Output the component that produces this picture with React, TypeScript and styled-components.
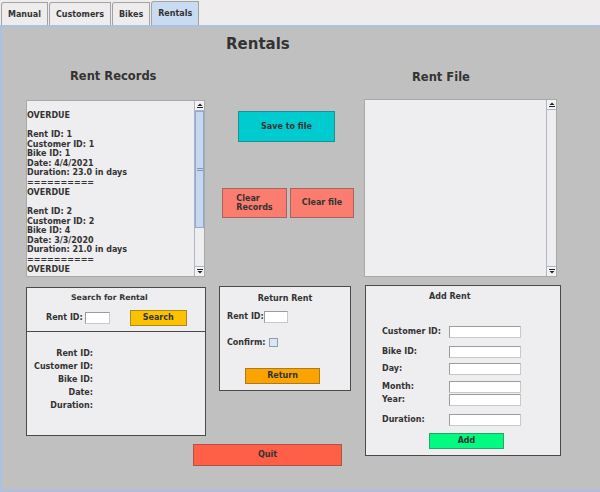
import React from "react";
import styled, { createGlobalStyle } from "styled-components";

const GlobalStyle = createGlobalStyle`
  html, body { margin: 0; padding: 0; }
  body { background: #eeeced; font-family: "DejaVu Sans", "Liberation Sans", sans-serif; }
  *, *::before, *::after { box-sizing: border-box; }
`;

const Window = styled.div`
  width: 600px;
  height: 492px;
  display: flex;
  flex-direction: column;
  overflow: hidden;
  background: #eeeced;
  color: #333;
  font-family: "DejaVu Sans", "Liberation Sans", sans-serif;
  font-weight: 700;
`;

const TabBar = styled.div`
  flex: 0 0 25px;
  display: flex;
  align-items: flex-end;
  gap: 1px;
  padding-left: 1px;
`;

const Tab = styled.div<{ $active?: boolean }>`
  height: ${({ $active }) => ($active ? 24 : 23)}px;
  padding: 0 6px;
  display: flex;
  align-items: center;
  font-size: 8px;
  border: 1px solid #a2a2a2;
  border-bottom: 0;
  border-top-left-radius: 3px;
  background: ${({ $active }) => ($active ? "#c9dbf0" : "#eeeced")};
`;

const Panel = styled.main`
  flex: 1;
  display: grid;
  grid-template-columns: 180px 158px 197px;
  grid-template-rows: 34px 30px 186px 159px auto;
  align-content: start;
  padding-left: 24px;
  background: #c1c0c1;
  border: 2px solid #a9c2e4;
  border-right: 0;
`;

const PageTitle = styled.h1`
  grid-column: 2 / 4;
  grid-row: 1;
  align-self: center;
  margin: 0 0 0 20px;
  font-size: 15px;
  line-height: 18px;
`;

const SectionTitle = styled.h2<{ $col: number; $ml: number; $mt: number }>`
  grid-column: ${({ $col }) => $col};
  grid-row: 2;
  align-self: center;
  margin: ${({ $mt }) => $mt}px 0 0 ${({ $ml }) => $ml}px;
  font-size: 11.5px;
  line-height: 14px;
`;

const ScrollPane = styled.div<{ $col: number; $mt: number; $w: number; $h: number }>`
  grid-column: ${({ $col }) => $col};
  grid-row: 3;
  align-self: start;
  margin-top: ${({ $mt }) => $mt}px;
  width: ${({ $w }) => $w}px;
  height: ${({ $h }) => $h}px;
  display: flex;
  border: 1px solid #a8a8a8;
  background: #eeedef;
`;

const PaneText = styled.pre`
  flex: 1;
  margin: 0;
  padding-left: 0;
  overflow: hidden;
  font-family: inherit;
  font-size: 8px;
  line-height: 9.63px;
  white-space: pre;
`;

const ScrollBar = styled.div`
  flex: 0 0 10px;
  display: flex;
  flex-direction: column;
  border-left: 1px solid #aeb6c2;
  background: #eeedef;
`;

const ScrollArrow = styled.div<{ $down?: boolean }>`
  flex: 0 0 10px;
  display: flex;
  align-items: center;
  justify-content: center;
  background: #f3f2f4;
  border-${({ $down }) => ($down ? "top" : "bottom")}: 1px solid #a9b4c4;
`;

const ScrollTrack = styled.div`
  flex: 1;
  display: flex;
  flex-direction: column;
`;

const ScrollThumb = styled.div<{ $h: number }>`
  height: ${({ $h }) => $h}px;
  display: flex;
  align-items: center;
  justify-content: center;
  background: #c6d8f0;
  border: 1px solid #8fa9d0;
`;

const ActionStack = styled.div`
  grid-column: 2;
  grid-row: 3;
  display: flex;
  flex-direction: column;
  align-items: flex-start;
  padding: 20px 0 0 16px;
`;

const ColorButton = styled.button<{ $w: number; $h: number; $bg: string }>`
  width: ${({ $w }) => $w}px;
  height: ${({ $h }) => $h}px;
  padding: 0;
  display: flex;
  align-items: center;
  justify-content: center;
  background: ${({ $bg }) => $bg};
  border: 1px solid rgba(70, 70, 70, 0.45);
  border-radius: 0;
  color: #333;
  font-family: inherit;
  font-weight: 700;
  font-size: 8px;
  line-height: 9.4px;
  text-align: left;
`;

const SaveButton = styled(ColorButton)`
  margin-left: 16px;
`;

const ClearRow = styled.div`
  margin-top: 46px;
  display: flex;
  gap: 3px;
`;

const GroupBox = styled.section<{ $w: number; $h: number; $mt: number; $ml: number }>`
  align-self: start;
  justify-self: start;
  width: ${({ $w }) => $w}px;
  height: ${({ $h }) => $h}px;
  margin: ${({ $mt }) => $mt}px 0 0 ${({ $ml }) => $ml}px;
  display: flex;
  flex-direction: column;
  align-items: flex-start;
  background: #eeedef;
  border: 1px solid #4a4a4a;
  font-size: 8px;
  line-height: 10px;
`;

const SearchBox = styled(GroupBox)`
  grid-column: 1;
  grid-row: 4;
`;

const ReturnBox = styled(GroupBox)`
  grid-column: 2;
  grid-row: 4;
  padding-top: 7px;
`;

const AddBox = styled(GroupBox)`
  grid-column: 3;
  grid-row: 4 / 6;
  padding-top: 6px;
`;

const SearchHeader = styled.div`
  align-self: stretch;
  height: 44px;
  padding-top: 5px;
  display: flex;
  flex-direction: column;
  border-bottom: 1px solid #4a4a4a;
`;

const BoxTitle = styled.div<{ $ml?: number; $center?: boolean; $size?: number }>`
  align-self: ${({ $center }) => ($center ? "center" : "flex-start")};
  margin-left: ${({ $ml }) => $ml ?? 0}px;
  font-size: ${({ $size }) => $size ?? 8}px;
  line-height: 10px;
`;

const FieldRow = styled.div<{ $mt: number; $pl: number; $h?: number }>`
  margin-top: ${({ $mt }) => $mt}px;
  padding-left: ${({ $pl }) => $pl}px;
  height: ${({ $h }) => $h ?? 12}px;
  display: flex;
  align-items: center;
`;

const FieldLabel = styled.span<{ $w?: number }>`
  ${({ $w }) => ($w ? `width: ${$w}px; flex: 0 0 ${$w}px;` : "")}
  white-space: nowrap;
`;

const TextField = styled.div<{ $w: number; $h: number; $ml?: number }>`
  width: ${({ $w }) => $w}px;
  height: ${({ $h }) => $h}px;
  margin-left: ${({ $ml }) => $ml ?? 0}px;
  background: #ffffff;
  border: 1px solid #9c9c9c;
  border-right-color: #c8c8c8;
  border-bottom-color: #c8c8c8;
`;

const CheckBox = styled.div`
  width: 9px;
  height: 9px;
  margin-left: 4px;
  background: #dce5f1;
  border: 1px solid #8c9db6;
`;

const ResultList = styled.div`
  padding-top: 15px;
  display: flex;
  flex-direction: column;
`;

const ResultLabel = styled.div`
  width: 66px;
  text-align: right;
  line-height: 13px;
`;

const BoxButton = styled(ColorButton)<{ $mt: number; $ml: number }>`
  margin: ${({ $mt }) => $mt}px 0 0 ${({ $ml }) => $ml}px;
  text-align: center;
`;

const QuitButton = styled(ColorButton)`
  grid-column: 1 / 3;
  grid-row: 5;
  justify-self: start;
  align-self: start;
  margin: 8px 0 0 167px;
`;

const ArrowIcon = ({ down }: { down?: boolean }) => (
  <svg width="6" height="5" viewBox="0 0 6 5">
    {down ? (
      <>
        <rect x="0" y="0" width="6" height="1" fill="#222" />
        <polygon points="0.5,2 5.5,2 3,4.5" fill="#222" />
      </>
    ) : (
      <>
        <polygon points="3,0.5 5.5,3 0.5,3" fill="#222" />
        <rect x="0" y="4" width="6" height="1" fill="#222" />
      </>
    )}
  </svg>
);

const Grip = () => (
  <svg width="6" height="4" viewBox="0 0 6 4">
    <rect x="0" y="0" width="6" height="1" fill="#7f98c0" />
    <rect x="0" y="2" width="6" height="1" fill="#7f98c0" />
  </svg>
);

const RECORDS = `
OVERDUE

Rent ID: 1
Customer ID: 1
Bike ID: 1
Date: 4/4/2021
Duration: 23.0 in days
==========
OVERDUE

Rent ID: 2
Customer ID: 2
Bike ID: 4
Date: 3/3/2020
Duration: 21.0 in days
==========
OVERDUE`;

const ADD_FIELDS: { label: string; mt: number }[] = [
  { label: "Customer ID:", mt: 24 },
  { label: "Bike ID:", mt: 8 },
  { label: "Day:", mt: 5 },
  { label: "Month:", mt: 6 },
  { label: "Year:", mt: 1 },
  { label: "Duration:", mt: 8 },
];

export default function App() {
  return (
    <>
      <GlobalStyle />
      <Window>
        <TabBar>
          <Tab>Manual</Tab>
          <Tab>Customers</Tab>
          <Tab>Bikes</Tab>
          <Tab $active>Rentals</Tab>
        </TabBar>
        <Panel>
          <PageTitle>Rentals</PageTitle>
          <SectionTitle $col={1} $ml={44} $mt={0}>Rent Records</SectionTitle>
          <SectionTitle $col={3} $ml={48} $mt={2}>Rent File</SectionTitle>

          <ScrollPane $col={1} $mt={9} $w={179} $h={177}>
            <PaneText>{RECORDS}</PaneText>
            <ScrollBar>
              <ScrollArrow><ArrowIcon /></ScrollArrow>
              <ScrollTrack>
                <ScrollThumb $h={117}><Grip /></ScrollThumb>
              </ScrollTrack>
              <ScrollArrow $down><ArrowIcon down /></ScrollArrow>
            </ScrollBar>
          </ScrollPane>

          <ActionStack>
            <SaveButton $w={97} $h={31} $bg="#00cbcf">Save to file</SaveButton>
            <ClearRow>
              <ColorButton $w={65} $h={30} $bg="#fa7d70">
                <span>Clear<br />Records</span>
              </ColorButton>
              <ColorButton $w={64} $h={30} $bg="#fa7d70">Clear file</ColorButton>
            </ClearRow>
          </ActionStack>

          <ScrollPane $col={3} $mt={8} $w={193} $h={178}>
            <PaneText />
            <ScrollBar>
              <ScrollArrow><ArrowIcon /></ScrollArrow>
              <ScrollTrack />
              <ScrollArrow $down><ArrowIcon down /></ScrollArrow>
            </ScrollBar>
          </ScrollPane>

          <SearchBox $w={180} $h={149} $mt={10} $ml={0}>
            <SearchHeader>
              <BoxTitle $ml={44} $size={7.8}>Search for Rental</BoxTitle>
              <FieldRow $mt={7} $pl={19} $h={16}>
                <FieldLabel>Rent ID:</FieldLabel>
                <TextField $w={25} $h={12} $ml={2} />
                <BoxButton $w={57} $h={16} $bg="#fcc200" $mt={0} $ml={20}>Search</BoxButton>
              </FieldRow>
            </SearchHeader>
            <ResultList>
              <ResultLabel>Rent ID:</ResultLabel>
              <ResultLabel>Customer ID:</ResultLabel>
              <ResultLabel>Bike ID:</ResultLabel>
              <ResultLabel>Date:</ResultLabel>
              <ResultLabel>Duration:</ResultLabel>
            </ResultList>
          </SearchBox>

          <ReturnBox $w={132} $h={105} $mt={9} $ml={13}>
            <BoxTitle $center>Return Rent</BoxTitle>
            <FieldRow $mt={7} $pl={7}>
              <FieldLabel>Rent ID:</FieldLabel>
              <TextField $w={24} $h={12} />
            </FieldRow>
            <FieldRow $mt={15} $pl={7} $h={9}>
              <FieldLabel>Confirm:</FieldLabel>
              <CheckBox />
            </FieldRow>
            <BoxButton $w={75} $h={16} $bg="#fba400" $mt={21} $ml={25}>Return</BoxButton>
          </ReturnBox>

          <AddBox $w={196} $h={171} $mt={8} $ml={1}>
            <BoxTitle $ml={63}>Add Rent</BoxTitle>
            {ADD_FIELDS.map((f) => (
              <FieldRow key={f.label} $mt={f.mt} $pl={16}>
                <FieldLabel $w={67}>{f.label}</FieldLabel>
                <TextField $w={72} $h={12} />
              </FieldRow>
            ))}
            <BoxButton $w={75} $h={16} $bg="#00fb80" $mt={7} $ml={63}>Add</BoxButton>
          </AddBox>

          <QuitButton $w={149} $h={22} $bg="#ff5f46">Quit</QuitButton>
        </Panel>
      </Window>
    </>
  );
}
